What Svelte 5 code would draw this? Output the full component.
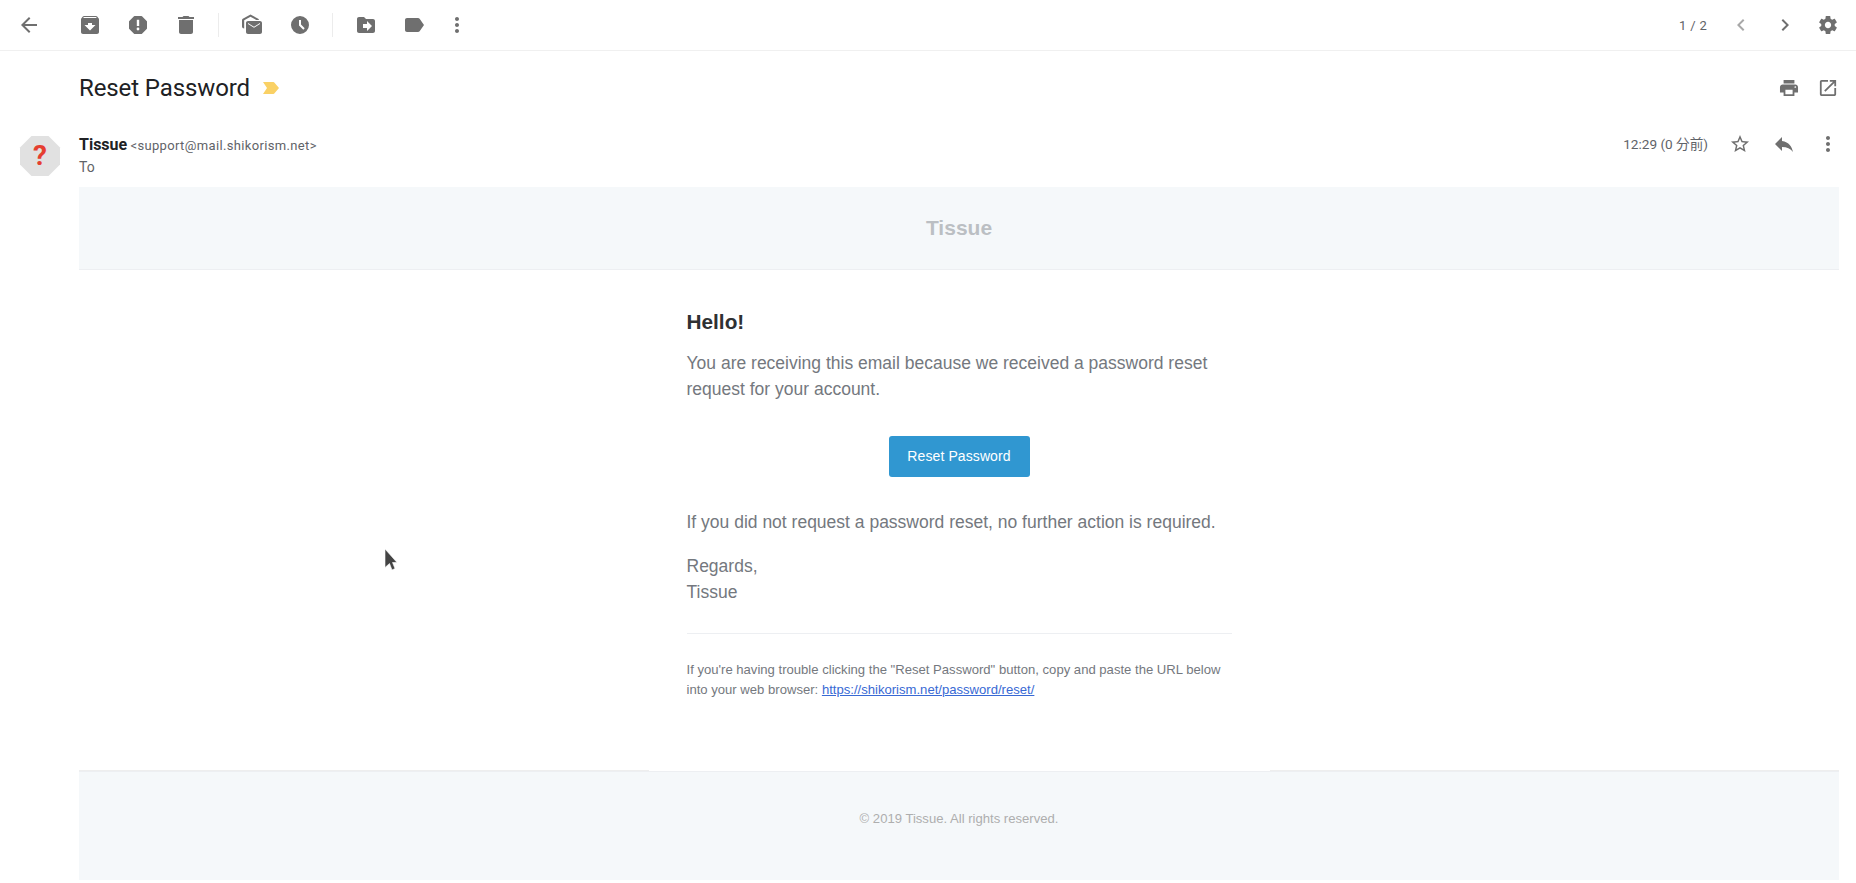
<script lang="ts">
  // icon paths on a 24x24 box, some redrawn to sit closer to the reference
  const icons: Record<string, string> = {
    back: "M20 11H7.83l5.59-5.59L12 4l-8 8 8 8 1.41-1.41L7.83 13H20v-2z",
    archive: "M20.54 5.23l-1.39-1.68C18.88 3.21 18.47 3 18 3H6c-.47 0-.88.21-1.16.55L3.46 5.23C3.17 5.57 3 6.02 3 6.5V19c0 1.1.9 2 2 2h14c1.1 0 2-.9 2-2V6.5c0-.48-.17-.93-.46-1.27zM12 17.5L6.5 12H10v-2h4v2h3.5L12 17.5zM5.12 5l.81-1h12l.94 1H5.12z",
    spam: "M15.3 3H8.7a1 1 0 0 0-.7.3L3.3 8a1 1 0 0 0-.3.7v6.6a1 1 0 0 0 .3.7L8 20.7a1 1 0 0 0 .7.3h6.6a1 1 0 0 0 .7-.3l4.7-4.7a1 1 0 0 0 .3-.7V8.7a1 1 0 0 0-.3-.7L16 3.3a1 1 0 0 0-.7-.3zM12 17.4a1.4 1.4 0 1 1 0-2.8 1.4 1.4 0 0 1 0 2.8zM13.2 13h-2.4V6.8h2.4z",
    trash: "M5 7h14v12c0 1.1-.9 2-2 2H7c-1.1 0-2-.9-2-2V7zM4 4h4.5l1-1h5l1 1H20v2H4z",
    mail: "M2 7.2c0-.55.3-1.05.77-1.33L10.5 1.5l7.7 4.3c.4.25.7.7.8 1.2h-2.7L10.5 3.7 4.2 7.2V15.5C3 15.5 2 14.6 2 13.5zM20 8H8c-1.1 0-2 .9-2 2v9c0 1.1.9 2 2 2h12c1.1 0 2-.9 2-2v-9c0-1.100-.9-2-2-2zM20 11l-6 3.720L8 11v-1l6 3.720L20 10z",
    clock: "M12 3a9 9 0 1 0 0 18 9 9 0 0 0 0-18zM15.300 16.700L11 12.400V7h2v4.600l3.700 3.700z",
    move: "M19 6h-7L10 4H5c-1.100 0-2 .9-2 2v12c0 1.100.9 2 2 2h14c1.100 0 2-.9 2-2V8c0-1.100-.9-2-2-2zM13 18v-3H9v-4h4V8l5 5z",
    label: "M17.630 5.840C17.270 5.330 16.670 5 16 5L5 5.010C3.900 5.010 3 5.900 3 7v10c0 1.100.9 1.990 2 1.990L16 19c.67 0 1.270-.33 1.630-.84L22 12l-4.370-6.160z",
    more: "M12 8c1.100 0 2-.9 2-2s-.9-2-2-2-2 .9-2 2 .9 2 2 2zm0 2c-1.100 0-2 .9-2 2s.9 2 2 2 2-.9 2-2-.9-2-2-2zm0 6c-1.100 0-2 .9-2 2s.9 2 2 2 2-.9 2-2-.9-2-2-2z",
    prev: "M15.410 7.410L14 6l-6 6 6 6 1.410-1.410L10.830 12z",
    next: "M10 6L8.590 7.410 13.170 12l-4.580 4.590L10 18l6-6z",
    gear: "M19.430 12.980c.04-.32.07-.64.07-.98s-.03-.66-.07-.98l2.110-1.650c.19-.15.24-.42.12-.64l-2-3.460c-.12-.22-.39-.3-.61-.22l-2.490 1c-.52-.4-1.080-.73-1.690-.98l-.38-2.650C14.460 2.180 14.250 2 14 2h-4c-.25 0-.46.18-.49.42l-.38 2.650c-.61.25-1.170.59-1.690.98l-2.490-1c-.23-.09-.49 0-.61.22l-2 3.460c-.13.22-.07.49.12.64l2.110 1.650c-.04.32-.07.65-.07.98s.03.66.07.98l-2.110 1.650c-.19.15-.24.42-.12.64l2 3.460c.12.22.39.3.61.22l2.490-1c.52.4 1.080.73 1.690.98l.38 2.650c.03.24.24.42.49.42h4c.25 0 .46-.18.49-.42l.38-2.650c.61-.25 1.170-.59 1.690-.98l2.490 1c.23.09.49 0 .61-.22l2-3.460c.12-.22.07-.49-.12-.64l-2.110-1.650zM12 15.500c-1.930 0-3.500-1.570-3.500-3.500s1.570-3.500 3.500-3.500 3.500 1.570 3.500 3.500-1.570 3.500-3.500 3.500z",
    print: "M19 8H5c-1.660 0-3 1.340-3 3v6h4v4h12v-4h4v-6c0-1.660-1.340-3-3-3zM16 19H8v-5h8zM19 12c-.55 0-1-.45-1-1s.45-1 1-1 1 .45 1 1-.45 1-1 1zM18 3H6v4h12z",
    open: "M19 19H5V5h7V3H5c-1.110 0-2 .9-2 2v14c0 1.100.89 2 2 2h14c1.100 0 2-.9 2-2v-7h-2zM14 3v2h3.590l-9.830 9.830 1.410 1.410L19 6.410V10h2V3z",
    star: "M22 9.240l-7.190-.62L12 2 9.190 8.630 2 9.240l5.460 4.730L5.820 21 12 17.270 18.180 21l-1.630-7.030zM12 15.400l-3.760 2.270 1-4.280-3.320-2.880 4.380-.38L12 6.100l1.710 4.040 4.380.38-3.320 2.880 1 4.280z",
    reply: "M10 9V5l-7 7 7 7v-4.100c5 0 8.500 1.600 11 5.100-1-5-4-10-11-11z",
  };

  // these four are drawn about 10% smaller than the stock glyph
  const small = new Set(["gear", "print", "open", "star"]);

  const leftGroups = [
    ["archive", "spam", "trash"],
    ["mail", "clock"],
    ["move", "label"],
  ];
</script>

{#snippet icon(name, cls = "")}
  <svg class="icon {cls}" viewBox={small.has(name) ? "-1.300 -1.300 26.600 26.600" : "0 0 24 24"} width="24" height="24" aria-hidden="true"><path d={icons[name]} /></svg>
{/snippet}

<div class="page">
  <header class="toolbar">
    <div class="back">{@render icon("back")}</div>
    {#each leftGroups as group, i}
      {#if i > 0}<span class="divider"></span>{/if}
      <div class="group">
        {#each group as name}
          {@render icon(name)}
        {/each}
      </div>
    {/each}
    <div class="tool-more">{@render icon("more")}</div>
    <div class="pager">
      <span class="count">1 / 2</span>
      <div class="actions">
        {@render icon("prev", "faint")}
        {@render icon("next")}
      </div>
      <div class="gear">{@render icon("gear")}</div>
    </div>
  </header>

  <div class="subject-row">
    <h1>Reset Password</h1>
    <svg class="marker" viewBox="0 0 17 12" width="17" height="12" aria-hidden="true"><path d="M1 0h10.500a1 1 0 0 1 .8.4L17 6l-4.700 5.600a1 1 0 0 1-.8.4H1l4-6z" /></svg>
    <div class="actions subject-actions">
      {@render icon("print")}
      {@render icon("open")}
    </div>
  </div>

  <div class="sender-row">
    <div class="avatar">
      <svg viewBox="0 0 42 42" width="42" height="42" aria-hidden="true"><path d="M12.500 1h17L41 12.500v17L29.500 41h-17L1 29.500v-17z" /></svg>
      <span>?</span>
    </div>
    <div class="sender">
      <div><b>Tissue</b> <span class="address">&lt;support@mail.shikorism.net&gt;</span></div>
      <div class="to">To</div>
    </div>
    <div class="meta">
      <span class="time">12:29 (0 分前)</span>
      <div class="actions">
        {@render icon("star")}
        {@render icon("reply")}
        {@render icon("more")}
      </div>
    </div>
  </div>

  <article class="mail">
    <div class="mail-head">Tissue</div>
    <div class="mail-body">
      <h2>Hello!</h2>
      <p>You are receiving this email because we received a password reset request for your account.</p>
      <div class="btn-row"><span class="btn">Reset Password</span></div>
      <p>If you did not request a password reset, no further action is required.</p>
      <p>Regards,<br />Tissue</p>
      <div class="subcopy">
        If you're having trouble clicking the "Reset Password" button, copy and paste the URL below
        into your web browser: <a href="#reset">https://shikorism.net/password/reset/</a>
      </div>
    </div>
    <div class="mail-foot">© 2019 Tissue. All rights reserved.</div>
  </article>

  <svg class="cursor" viewBox="0 0 14 24" width="14" height="24" aria-hidden="true"><path d="M1 1l12 13.500H8.500l2.500 6-3 1.500-2.500-6.500L1 19.500z" /></svg>
</div>

<style>
  :global(body) {
    margin: 0;
    background: #fff;
  }

  .page {
    position: relative;
    width: 1856px;
    height: 883px;
    overflow: hidden;
    font-family: Roboto, "Noto Sans CJK JP", sans-serif;
    color: #5f6368;
  }

  .icon {
    display: block;
    fill: #6f6f6f;
    fill-rule: evenodd;
    flex-shrink: 0;
  }
  .faint {
    fill: #a8a8a8;
  }

  /* toolbar */
  .toolbar {
    display: flex;
    align-items: center;
    height: 51px;
    box-sizing: border-box;
    border-bottom: 1px solid #f0f0f0;
    padding-left: 17px;
  }
  .back {
    margin-right: 37px;
  }
  .group {
    display: flex;
    gap: 24px;
  }
  .divider {
    width: 1px;
    height: 24px;
    background: #ececec;
    margin: 0 21px 0 20px;
  }
  .tool-more {
    margin-left: 19px;
  }
  .pager {
    margin-left: auto;
    display: flex;
    align-items: center;
    padding-right: 16px;
  }
  .count {
    font-size: 13px;
    letter-spacing: 0.3px;
    color: #5f6368;
    margin-right: 21px;
  }
  .pager .actions {
    margin-right: 19px;
    margin-left: 1px;
  }
  .actions {
    display: flex;
    gap: 20px;
    align-items: center;
  }

  /* subject */
  .subject-row {
    display: flex;
    align-items: center;
    height: 74px;
    padding: 0 16px 0 79px;
  }
  h1 {
    margin: 0;
    font-size: 24px;
    font-weight: 400;
    color: #202124;
    letter-spacing: -0.1px;
  }
  .marker {
    margin-left: 12px;
    fill: #fad165;
  }
  .subject-actions {
    margin-left: auto;
    gap: 15px;
  }

  /* sender */
  .sender-row {
    display: flex;
    height: 62px;
    padding-right: 16px;
  }
  .avatar {
    position: relative;
    width: 42px;
    height: 42px;
    margin: 10px 18px 0 19px;
  }
  .avatar svg {
    fill: #e1e1e1;
    display: block;
  }
  .avatar span {
    position: absolute;
    inset: 0;
    text-align: center;
    line-height: 42px;
    font-size: 28px;
    font-weight: 700;
    color: #e53e30;
  }
  .sender {
    padding-top: 10px;
    font-size: 13px;
    line-height: 20px;
  }
  .sender b {
    font-size: 16px;
    font-weight: 700;
    color: #202124;
  }
  .address {
    letter-spacing: 0.35px;
  }
  .to {
    margin-top: 1px;
    font-size: 14px;
  }
  .meta {
    margin-left: auto;
    display: flex;
    align-items: flex-start;
    padding-top: 7px;
  }
  .time {
    font-size: 13.600px;
    line-height: 24px;
    margin-right: 20px;
  }

  /* email body */
  .mail {
    margin: 0 17px 0 79px;
    font-family: "Liberation Sans", Arial, sans-serif;
  }
  .mail-head {
    height: 83px;
    line-height: 81px;
    box-sizing: border-box;
    background: #f5f8fa;
    border-bottom: 1px solid #edeff2;
    text-align: center;
    font-size: 21px;
    font-weight: 700;
    color: #bbbfc3;
  }
  .mail-body {
    width: 545px;
    margin: 0 auto;
    padding-top: 35px;
    height: 501px;
    box-sizing: border-box;
  }
  h2 {
    margin: 0 0 11px;
    font-size: 20.800px;
    line-height: 34px;
    font-weight: 700;
    color: #2f3133;
  }
  p {
    margin: 0 0 18px;
    font-size: 17.500px;
    line-height: 26px;
    color: #74787e;
  }
  .btn-row {
    display: flex;
    justify-content: center;
    margin: 34px 0 32px;
  }
  .btn {
    display: block;
    width: 141px;
    height: 41px;
    line-height: 41px;
    text-align: center;
    background: #3097d1;
    border-radius: 3px;
    color: #fff;
    font-size: 14px;
    letter-spacing: 0.1px;
  }
  .subcopy {
    border-top: 1px solid #edeff2;
    margin-top: 28px;
    padding-top: 26px;
    font-size: 13.100px;
    line-height: 20px;
    color: #74787e;
  }
  .subcopy a {
    color: #3869d4;
  }
  .mail-foot {
    position: relative;
    height: 109px;
    box-sizing: border-box;
    padding-top: 37px;
    background: #f5f8fa;
    border-top: 1px solid #edeff2;
    text-align: center;
    font-size: 13.100px;
    line-height: 20px;
    color: #aeaeae;
  }
  /* the outer table edge shows either side of the inner one */
  .mail-foot::before {
    content: "";
    position: absolute;
    top: -2px;
    left: 0;
    right: 0;
    height: 1px;
    background: linear-gradient(to right, #eee 570px, transparent 570px, transparent 1191px, #eee 1191px);
  }

  /* mouse pointer captured in the screenshot */
  .cursor {
    position: absolute;
    left: 384px;
    top: 548px;
    fill: #444;
    stroke: #fff;
    stroke-width: 0.6;
  }
</style>
